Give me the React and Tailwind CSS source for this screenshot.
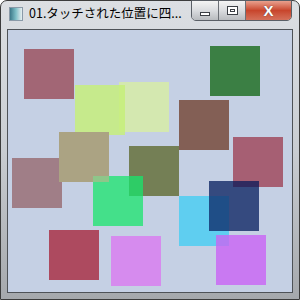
import React from 'react';

// squares drawn on the client canvas: [left, top, colour]
const squares = [
  [24, 49, '#a26675'],
  [119, 82, '#d4e8b0'],
  [75, 85, '#c6ea8c'],
  [12, 158, '#a07e87'],
  [59, 132, '#aba383'],
  [129, 146, '#747f55'],
  [210, 46, '#3b7f44'],
  [179, 100, '#835f55'],
  [233, 137, '#a65f73'],
  [93, 176, '#44e08a'],
  [49, 230, '#ad4a5f'],
  [111, 236, '#d68bee'],
  [179, 196, '#5fcef0'],
  [216, 235, '#c979f2'],
  [209, 181, '#354a7f'],
];

// blended colour where two translucent squares cross
const overlaps = [
  [119, 85, 6, 47, '#c8ee82'],
  [129, 176, 14, 20, '#2ecc66'],
  [93, 176, 16, 6, '#8ec68a'],
  [209, 196, 20, 35, '#1f4e87'],
  [233, 181, 26, 6, '#302a5f'],
  [216, 235, 13, 11, '#b37bf2'],
];

const App = () => {
  return (
    <div className="w-[300px] h-[300px] bg-white relative overflow-hidden" style={{ fontFamily: '"Noto Sans CJK JP", sans-serif' }}>
      <div className="absolute inset-0 rounded-t-[7px] border border-[#3c3c3c] bg-gradient-to-b from-[#dcdfe3] via-[#c9cdd2] to-[#a5a8ac] flex flex-col">
        {/* title bar */}
        <div className="h-[28px] flex items-start relative shrink-0">
          <div className="mt-[6px] ml-[8px] w-[14px] h-[14px] border border-[#8a9aa8] bg-gradient-to-r from-[#3d7a8a] via-[#7fc0c8] to-[#e8eef0]" />
          <span className="ml-[6px] mt-[3px] text-[12.5px] leading-[18px] text-black">01.タッチされた位置に四...</span>
          <div className="absolute right-[7px] top-[-1px] flex h-[21px] border border-[#5a5f66] rounded-b-[5px] overflow-hidden">
            <div className="w-[27px] h-full bg-gradient-to-b from-[#f4f4f4] via-[#dadcdf] to-[#b8bbbf] border-r border-[#6c7076] flex items-center justify-center">
              <div className="w-[10px] h-[4px] bg-white border border-[#3b3f45] mt-[6px]" />
            </div>
            <div className="w-[27px] h-full bg-gradient-to-b from-[#f4f4f4] via-[#dadcdf] to-[#b8bbbf] border-r border-[#6c7076] flex items-center justify-center">
              <div className="w-[11px] h-[9px] bg-white border border-[#3b3f45] flex items-center justify-center">
                <div className="w-[5px] h-[3px] border border-[#3b3f45]" />
              </div>
            </div>
            <div className="w-[45px] h-full bg-gradient-to-b from-[#e8a08e] via-[#c8452c] to-[#d4705a] flex items-center justify-center">
              <span className="text-white text-[15px] font-bold leading-none" style={{ fontFamily: '"Liberation Sans", sans-serif', textShadow: '0 0 1px #333' }}>X</span>
            </div>
          </div>
        </div>
        {/* client area */}
        <div className="mx-[6px] mb-[6px] flex-1 border border-[#4e5257] bg-[#c5d0e4] relative overflow-hidden">
          {squares.map(([x, y, c], i) => (
            <div key={i} className="absolute w-[50px] h-[50px]" style={{ left: x - 8, top: y - 30, backgroundColor: c }} />
          ))}
          {overlaps.map(([x, y, w, h, c], i) => (
            <div key={'o' + i} className="absolute" style={{ left: x - 8, top: y - 30, width: w, height: h, backgroundColor: c }} />
          ))}
        </div>
      </div>
    </div>
  );
};

export default App;
